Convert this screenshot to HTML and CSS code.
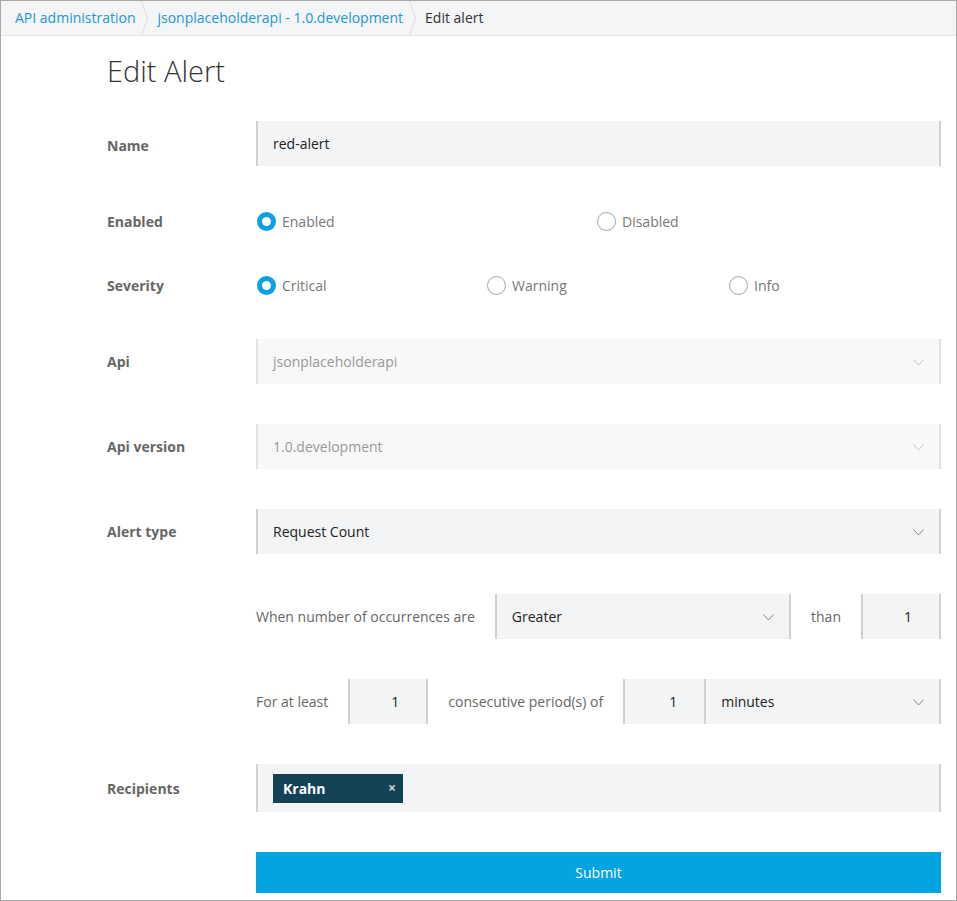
FILE: index.html
```html
<!DOCTYPE html>
<html>
<head>
<meta charset="utf-8">
<link rel="stylesheet" href="styles.css">
</head>
<body>
<div class="frame">
  <nav class="crumbs">
    <a class="crumb link">API administration</a>
    <svg class="sep" width="8" height="35" viewBox="0 0 8 35"><polyline points="0.5,0 6.5,17.5 0.5,35" fill="none" stroke="#dcdde0" stroke-width="1"/></svg>
    <a class="crumb link">jsonplaceholderapi - 1.0.development</a>
    <svg class="sep" width="8" height="35" viewBox="0 0 8 35"><polyline points="0.5,0 6.5,17.5 0.5,35" fill="none" stroke="#dcdde0" stroke-width="1"/></svg>
    <span class="crumb current">Edit alert</span>
  </nav>

  <main class="content">
    <h1 class="title">Edit Alert</h1>

    <div class="row row-name">
      <label class="lbl">Name</label>
      <div class="field"><span class="val">red-alert</span></div>
    </div>

    <div class="row row-enabled">
      <label class="lbl">Enabled</label>
      <div class="radios two">
        <span class="radio"><span class="dot on"></span>Enabled</span>
        <span class="radio"><span class="dot"></span>Disabled</span>
      </div>
    </div>

    <div class="row row-severity">
      <label class="lbl">Severity</label>
      <div class="radios three">
        <span class="radio"><span class="dot on"></span>Critical</span>
        <span class="radio"><span class="dot"></span>Warning</span>
        <span class="radio"><span class="dot"></span>Info</span>
      </div>
    </div>

    <div class="row row-api">
      <label class="lbl">Api</label>
      <div class="field select disabled"><span class="val">jsonplaceholderapi</span>
        <svg class="chev" width="11" height="7" viewBox="0 0 11 7"><polyline points="0.5,0.5 5.5,6 10.5,0.5" fill="none" stroke="#c4c4c4" stroke-width="1"/></svg>
      </div>
    </div>

    <div class="row row-gap">
      <label class="lbl">Api version</label>
      <div class="field select disabled"><span class="val">1.0.development</span>
        <svg class="chev" width="11" height="7" viewBox="0 0 11 7"><polyline points="0.5,0.5 5.5,6 10.5,0.5" fill="none" stroke="#c4c4c4" stroke-width="1"/></svg>
      </div>
    </div>

    <div class="row row-gap">
      <label class="lbl">Alert type</label>
      <div class="field select"><span class="val">Request Count</span>
        <svg class="chev" width="11" height="7" viewBox="0 0 11 7"><polyline points="0.5,0.5 5.5,6 10.5,0.5" fill="none" stroke="#8a8a8a" stroke-width="1"/></svg>
      </div>
    </div>

    <div class="row row-gap">
      <span class="lbl"></span>
      <div class="inline">
        <span class="txt">When number of occurrences are</span>
        <div class="field select grow"><span class="val">Greater</span>
          <svg class="chev" width="11" height="7" viewBox="0 0 11 7"><polyline points="0.5,0.5 5.5,6 10.5,0.5" fill="none" stroke="#8a8a8a" stroke-width="1"/></svg>
        </div>
        <span class="txt">than</span>
        <div class="field num"><span class="val">1</span></div>
      </div>
    </div>

    <div class="row row-gap">
      <span class="lbl"></span>
      <div class="inline">
        <span class="txt">For at least</span>
        <div class="field num"><span class="val">1</span></div>
        <span class="txt">consecutive period(s) of</span>
        <div class="joined">
          <div class="field num"><span class="val">1</span></div>
          <div class="field select grow"><span class="val">minutes</span>
            <svg class="chev" width="11" height="7" viewBox="0 0 11 7"><polyline points="0.5,0.5 5.5,6 10.5,0.5" fill="none" stroke="#8a8a8a" stroke-width="1"/></svg>
          </div>
        </div>
      </div>
    </div>

    <div class="row row-gap">
      <label class="lbl">Recipients</label>
      <div class="field tags">
        <span class="tag">Krahn<span class="x">×</span></span>
      </div>
    </div>

    <div class="row row-gap">
      <span class="lbl"></span>
      <button class="submit">Submit</button>
    </div>
  </main>
</div>
</body>
</html>
```

FILE: styles.css
```css
* { box-sizing: border-box; }
html, body { margin: 0; padding: 0; background: #fff; }
body { font-family: "Open Sans", "Liberation Sans", sans-serif; font-size: 14px; color: #333; }

.frame {
  width: 957px;
  height: 901px;
  border: 1px solid #a8a8a8;
  overflow: hidden;
}

.crumbs {
  height: 35px;
  background: #f4f5f7;
  border-bottom: 1px solid #e3e4e6;
  display: flex;
  align-items: center;
  padding-left: 14px;
}
.crumb { line-height: 34px; white-space: nowrap; }
.link { color: #1b98d8; text-decoration: none; }
.current { color: #333; }
.sep { margin: 0 8px 0 6px; flex: none; }

.content { padding: 0 15px 0 106px; }

.title {
  margin: 15px 0 31px;
  font-size: 29px;
  line-height: 39px;
  font-weight: 300;
  color: #333;
  letter-spacing: 0;
}

.row {
  display: grid;
  grid-template-columns: 149px 1fr;
  align-items: center;
}
.row-name .lbl { padding-top: 4px; }
.row-enabled { margin-top: 40px; height: 30px; }
.row-severity { margin-top: 34px; height: 30px; }
.row-api { margin-top: 39px; }
.row-gap { margin-top: 40px; }

.lbl { font-weight: 700; color: #666; font-size: 14px; }

.field {
  height: 45px;
  background: #f3f4f6;
  border-left: 2px solid #cfd0d2;
  border-right: 2px solid #cfd0d2;
  display: flex;
  align-items: center;
  padding: 0 15px;
  color: #222;
}
.field.disabled { background: #f8f8f8; color: #999; border-color: #e2e2e2; }
.select { justify-content: space-between; padding-right: 15px; }
.chev { flex: none; margin-top: 2px; }

.radios { display: grid; align-items: center; height: 30px; }
.radios.two { grid-template-columns: 340px 1fr; }
.radios.three { grid-template-columns: 230px 242px 1fr; }
.radio { display: flex; align-items: center; color: #777; padding-left: 1px; }
.dot {
  width: 19px; height: 19px;
  border-radius: 50%;
  border: 1px solid #a5a5a5;
  background: #fff;
  margin-right: 6px;
  flex: none;
}
.dot.on { border: 5px solid #0ba1e0; }

.inline { display: flex; align-items: center; gap: 20px; }
.txt { color: #666; white-space: nowrap; }
.grow { flex: 1; }
.num { width: 80px; justify-content: flex-end; padding: 0 27px 0 0; flex: none; }
.joined { display: flex; flex: 1; }
.joined .num { width: 81px; border-right: none; }
.joined .select { padding-left: 15px; }

.tags { height: 48px; padding-left: 15px; }
.tag {
  display: flex; align-items: center;
  width: 130px; height: 29px;
  background: #134256;
  color: #fff;
  font-weight: 700;
  padding-left: 10px;
  position: relative;
}
.x { position: absolute; right: 7px; top: 5px; font-size: 14px; color: #c8d0d4; font-weight: 700; line-height: 18px; }

.submit {
  height: 41px;
  width: 100%;
  border: none;
  background: #03a4e0;
  color: #fff;
  font-family: "Open Sans", "Liberation Sans", sans-serif;
  font-size: 14px;
  padding: 0;
}
```
